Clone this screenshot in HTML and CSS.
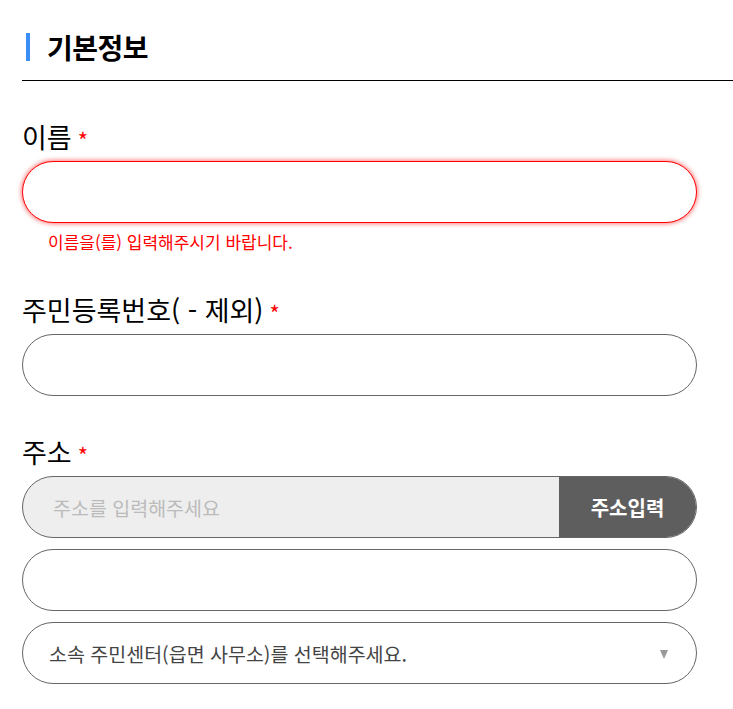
FILE: index.html
```html
<!DOCTYPE html>
<html lang="ko">
<head>
<meta charset="utf-8">
<link rel="stylesheet" href="styles.css">
</head>
<body>
<div class="page">
  <h2 class="section-title"><span class="bar"></span>기본정보</h2>

  <div class="field">
    <label class="label">이름 <span class="req">*</span></label>
    <div class="input error"></div>
    <p class="error-msg">이름을(를) 입력해주시기 바랍니다.</p>
  </div>

  <div class="field">
    <label class="label">주민등록번호( - 제외) <span class="req">*</span></label>
    <div class="input"></div>
  </div>

  <div class="field">
    <label class="label">주소 <span class="req">*</span></label>
    <div class="input addr">
      <span class="placeholder">주소를 입력해주세요</span>
      <span class="addr-btn">주소입력</span>
    </div>
    <div class="input"></div>
    <div class="input select">
      <span class="select-text">소속 주민센터(읍면 사무소)를 선택해주세요.</span>
      <span class="arrow"></span>
    </div>
  </div>
</div>
</body>
</html>
```

FILE: styles.css
```css
* { box-sizing: border-box; }
body {
  margin: 0;
  background: #fff;
  font-family: "Noto Sans CJK KR", "Noto Sans", sans-serif;
  color: #000;
}
.page {
  padding: 29px 0 0 22px;
}
.section-title {
  margin: 0;
  display: flex;
  align-items: center;
  gap: 17px;
  font-size: 28px;
  font-weight: 700;
  line-height: 36px;
  padding: 0 0 15px 4px;
  border-bottom: 1px solid #000;
  letter-spacing: -0.5px;
}
.bar {
  width: 4px;
  height: 28px;
  background: #3a8ef5;
}
.field {
  margin-top: 38px;
  width: 675px;
}
.field + .field { margin-top: 38px; }
.label {
  display: flex;
  align-items: center;
  gap: 6px;
  font-size: 27px;
  line-height: 36px;
  margin-bottom: 6px;
}
.req {
  color: #f00;
  font-size: 22px;
  line-height: 1;
  margin-top: 4px;
}
.input {
  height: 62px;
  border: 1px solid #666;
  border-radius: 31px;
  background: #fff;
}
.input + .input { margin-top: 11px; }
.input.error {
  border-color: #f00;
  box-shadow: 0 0 4px 1px rgba(255, 0, 0, 0.5);
}
.error-msg {
  margin: 7px 0 0 26px;
  color: #f00;
  font-size: 17px;
  line-height: 24px;
}
.addr {
  display: flex;
  align-items: stretch;
  background: #eee;
  overflow: hidden;
}
.placeholder {
  flex: 1;
  display: flex;
  align-items: center;
  padding-left: 30px;
  color: #bbb;
  font-size: 19.5px;
}
.addr-btn {
  width: 137px;
  display: flex;
  align-items: center;
  justify-content: center;
  background: #5e5e5e;
  color: #fff;
  font-size: 20px;
  font-weight: 700;
}
.select {
  display: flex;
  align-items: center;
  justify-content: space-between;
  padding: 0 28px 0 26px;
}
.select-text {
  color: #444;
  font-size: 19.5px;
}
.arrow {
  width: 0;
  height: 0;
  border-left: 4.5px solid transparent;
  border-right: 4.5px solid transparent;
  border-top: 9px solid #999;
  margin-top: 2px;
}
```
